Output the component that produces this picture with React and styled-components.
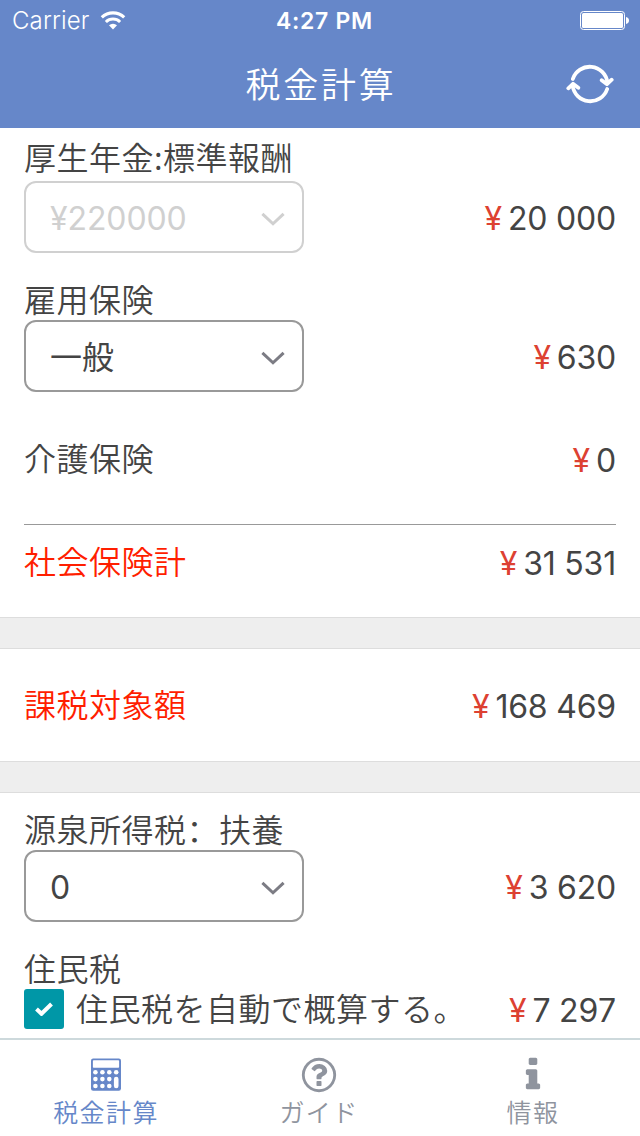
import { useState } from 'react';
import styled, { createGlobalStyle } from 'styled-components';

const GlobalStyle = createGlobalStyle`
  * {
    box-sizing: border-box;
  }

  body {
    margin: 0;
    background: #fff;
    font-family: Inter, 'Noto Sans CJK JP', sans-serif;
    font-weight: 350;
    color: #444;
  }
`;

const Screen = styled.div`
  display: flex;
  flex-direction: column;
  width: 640px;
  height: 1136px;
  overflow: hidden;
  background: #fff;
`;

const Header = styled.header`
  flex: none;
  height: 128px;
  background: #6687c9;
  color: #fff;
`;

const StatusBar = styled.div`
  display: grid;
  grid-template-columns: 1fr auto 1fr;
  align-items: center;
  height: 40px;
  padding: 1px 11px 0 12px;
  font-size: 24px;
`;

const Carrier = styled.div`
  display: flex;
  align-items: center;
  gap: 10px;
  font-weight: 350;
  letter-spacing: 0.15px;
`;

const Clock = styled.div`
  padding-left: 8px;
  font-weight: 600;
  font-size: 23px;
  letter-spacing: 0.7px;
`;

const BatterySlot = styled.div`
  display: flex;
  justify-content: flex-end;
`;

const NavBar = styled.div`
  display: grid;
  grid-template-columns: 100px 1fr 100px;
  align-items: center;
  height: 88px;
`;

const Title = styled.h1`
  grid-column: 2;
  margin: 0;
  font-family: 'Noto Sans CJK JP', sans-serif;
  font-size: 35px;
  font-weight: 350;
  line-height: 86px;
  height: 88px;
  letter-spacing: 2.7px;
  text-indent: 2px;
  text-align: center;
`;

const IconButton = styled.button`
  display: flex;
  justify-content: center;
  padding: 0;
  border: 0;
  background: none;
  color: inherit;
`;

const Content = styled.main`
  flex: 1;
  min-height: 0;
  overflow: hidden;
`;

const Section = styled.section`
  padding: ${props => props.$pad || '0 24px'};
`;

const Separator = styled.div`
  height: 32px;
  background: #eee;
  border-top: 1px solid #ddd;
  border-bottom: 1px solid #ddd;
`;

const Divider = styled.hr`
  height: 1px;
  margin: 0;
  border: 0;
  background: #999;
`;

const Label = styled.div`
  height: ${props => props.$height || 40}px;
  line-height: 37px;
  font-family: 'Noto Sans CJK JP', sans-serif;
  font-size: 32px;
  letter-spacing: 0.5px;
  white-space: nowrap;
  color: ${props => (props.$total ? '#ff1e00' : 'inherit')};
`;

/* full-width colon set on the left of its cell */
const Colon = styled.span`
  font-family: 'Noto Sans CJK SC', sans-serif;
`;

const Row = styled.div`
  display: flex;
  align-items: center;
  justify-content: space-between;
  height: ${props => props.$height}px;
  margin-bottom: ${props => props.$gap || 0}px;
`;

const Select = styled.button`
  display: flex;
  align-items: center;
  justify-content: space-between;
  width: 280px;
  height: 72px;
  padding: 3px 17px 0 24px;
  border: 2px solid ${props => (props.disabled ? '#d0d0d0' : '#999')};
  border-radius: 12px;
  background: #fff;
  font: inherit;
  font-size: 32px;
  font-weight: 370;
  line-height: 40px;
  letter-spacing: -0.1px;
  color: ${props => (props.disabled ? '#d0d0d0' : '#444')};

  svg {
    color: ${props => (props.disabled ? '#d0d0d0' : '#7c7c84')};
  }
`;

const AmountText = styled.div`
  display: flex;
  align-items: center;
  gap: 6px;
  padding-top: 3px;
  font-size: 32px;
  font-weight: 370;
  font-kerning: none;
  line-height: 40px;
  letter-spacing: -0.2px;
  white-space: pre;
`;

const Yen = styled.span`
  color: #dd4132;
`;

const CheckRow = styled.label`
  display: flex;
  align-items: center;
  gap: 12px;
`;

const CheckBox = styled.span`
  display: flex;
  align-items: center;
  justify-content: center;
  width: 40px;
  height: 40px;
  border-radius: 3px;
  background: #0097a7;
  color: #fff;
`;

const TabBar = styled.nav`
  flex: none;
  display: grid;
  grid-template-columns: 212px 214px 214px;
  height: 98px;
  border-top: 2px solid #cdd9dc;
  background: #fff;
`;

const Tab = styled.button`
  display: flex;
  flex-direction: column;
  align-items: center;
  padding: 15px 0 0;
  border: 0;
  background: none;
  font-family: 'Noto Sans CJK JP', sans-serif;
  font-weight: 350;
  font-size: 25px;
  line-height: 32px;
  letter-spacing: 1.4px;
  color: ${props => (props.$active ? '#6687c9' : '#8f949e')};

  svg {
    height: 40px;
  }
`;

const WifiIcon = () => (
  <svg width="26" height="20" viewBox="0 0 26 20" fill="none" stroke="currentColor">
    <path d="M1.8 6.4a16.2 16.2 0 0 1 22.4 0" strokeWidth="3.2" />
    <path d="M5.9 11a10.2 10.2 0 0 1 14.2 0" strokeWidth="3" />
    <path d="M13 18.6l-4-4.3a6 6 0 0 1 8 0z" fill="currentColor" stroke="none" />
  </svg>
);

const BatteryIcon = () => (
  <svg width="49" height="19" viewBox="0 0 49 19">
    <rect x="0.5" y="0.5" width="44" height="18" rx="3" fill="none" stroke="#fff" />
    <rect x="2" y="2" width="41" height="15" rx="1.5" fill="#fff" />
    <path d="M46 6q3 0.8 3 3.5T46 13z" fill="#fff" />
  </svg>
);

const RefreshIcon = () => (
  <svg width="48" height="42" viewBox="0 0 48 42" fill="none" stroke="currentColor" strokeWidth="3.8" strokeLinecap="round" strokeLinejoin="round">
    <path d="M6.8 16a17.8 17.8 0 0 1 34.6 3.6" />
    <path d="M41.2 26a17.8 17.8 0 0 1-34.6-3.6" />
    <path d="M35.7 17.2l5.3 4 4.7-4.5" />
    <path d="M2.3 25.3l4.7-4.5 5.3 4" />
  </svg>
);

const ChevronIcon = () => (
  <svg width="24" height="14" viewBox="0 0 24 14" fill="none" stroke="currentColor" strokeWidth="3">
    <path d="M1.4 1.8L12 11.8 22.6 1.8" />
  </svg>
);

const CheckIcon = () => (
  <svg width="20" height="14" viewBox="0 0 20 14" fill="none" stroke="currentColor" strokeWidth="4">
    <path d="M2.5 7l5 4.8L17.5 2" />
  </svg>
);

const CalculatorIcon = () => (
  <svg width="30" height="40" viewBox="0 0 30 40">
    <rect y="3.4" width="30" height="32.4" rx="2.2" fill="currentColor" />
    <rect x="1.9" y="5.3" width="26.2" height="7.4" rx="0.8" fill="#fff" />
    {[17.2, 24.1, 31].map(y => [4.4, 11.4, 18.3].map(x => (
      <circle key={`${x}-${y}`} cx={x} cy={y} r="2.3" fill="#fff" />
    )))}
    <circle cx="25.2" cy="17.2" r="2.3" fill="#fff" />
    <rect x="22.9" y="21.8" width="4.6" height="11.5" rx="2.3" fill="#fff" />
  </svg>
);

const HelpIcon = () => (
  <svg width="40" height="40" viewBox="0 0 1792 1792" fill="currentColor">
    <path d="M1008 1200v160q0 14-9 23t-23 9h-160q-14 0-23-9t-9-23v-160q0-14 9-23t23-9h160q14 0 23 9t9 23zm256-496q0 50-15 90t-45.5 69-52 44-59.5 36q-32 18-46.5 28t-26 24-11.5 29v32q0 14-9 23t-23 9h-160q-14 0-23-9t-9-23v-68q0-35 10.5-64.5t24-47.5 39-35.5 41-25.5 44.5-21q53-25 75-43t22-49q0-42-43.5-71.5t-95.5-29.5q-56 0-95 27-29 20-80 83-9 12-25 12-11 0-19-6l-108-82q-10-7-12-20t5-23q122-192 349-192 129 0 238.5 89.5t109.5 214.5zm-368-448q-130 0-248.5 51t-204 136.5-136.5 204-51 248.5 51 248.5 136.5 204 204 136.5 248.5 51 248.5-51 204-136.5 136.5-204 51-248.5-51-248.5-136.5-204-204-136.5-248.5-51zm768 640q0 209-103 385.5t-279.5 279.5-385.5 103-385.5-103-279.5-279.5-103-385.5 103-385.5 279.5-279.5 385.5-103 385.5 103 279.5 279.5 103 385.5z" />
  </svg>
);

const InfoIcon = () => (
  <svg width="40" height="40" viewBox="0 0 1792 1792" fill="currentColor">
    <path d="M1216 1344v128q0 26-19 45t-45 19h-512q-26 0-45-19t-19-45v-128q0-26 19-45t45-19h64v-384h-64q-26 0-45-19t-19-45v-128q0-26 19-45t45-19h384q26 0 45 19t19 45v576h64q26 0 45 19t19 45zm-128-1152v192q0 26-19 45t-45 19h-256q-26 0-45-19t-19-45v-192q0-26 19-45t45-19h256q26 0 45 19t19 45z" />
  </svg>
);

const Amount = ({ value }) => (
  <AmountText>
    <Yen>¥</Yen>
    <span>{String(value).replace(/\B(?=(\d{3})+$)/g, ' ')}</span>
  </AmountText>
);

const tabs = [
  { id: 'calc', label: '税金計算', Icon: CalculatorIcon },
  { id: 'guide', label: 'ガイド', Icon: HelpIcon },
  { id: 'info', label: '情報', Icon: InfoIcon },
];

const App = () => {
  const [activeTab, setActiveTab] = useState('calc');
  const [autoTax, setAutoTax] = useState(true);

  return (
    <Screen>
      <GlobalStyle />
      <Header>
        <StatusBar>
          <Carrier>
            Carrier
            <WifiIcon />
          </Carrier>
          <Clock>4:27 PM</Clock>
          <BatterySlot>
            <BatteryIcon />
          </BatterySlot>
        </StatusBar>
        <NavBar>
          <Title>税金計算</Title>
          <IconButton>
            <RefreshIcon />
          </IconButton>
        </NavBar>
      </Header>

      <Content>
        <Section $pad="10px 24px 0">
          <Label $height={43}>厚生年金:標準報酬</Label>
          <Row $height={72} $gap={27}>
            <Select disabled>
              ¥220000
              <ChevronIcon />
            </Select>
            <Amount value={20000} />
          </Row>
          <Label>雇用保険</Label>
          <Row $height={72} $gap={35}>
            <Select>
              一般
              <ChevronIcon />
            </Select>
            <Amount value={630} />
          </Row>
          <Row $height={64} $gap={33}>
            <Label>介護保険</Label>
            <Amount value={0} />
          </Row>
          <Divider />
          <Row $height={74} $gap={18}>
            <Label $total>社会保険計</Label>
            <Amount value={31531} />
          </Row>
        </Section>
        <Separator />
        <Section>
          <Row $height={112}>
            <Label $total>課税対象額</Label>
            <Amount value={168469} />
          </Row>
        </Section>
        <Separator />
        <Section $pad="17px 24px 0">
          <Label>源泉所得税<Colon lang="zh-CN">：</Colon>扶養</Label>
          <Row $height={72} $gap={27}>
            <Select>
              0
              <ChevronIcon />
            </Select>
            <Amount value={3620} />
          </Row>
          <Label>住民税</Label>
          <Row $height={40}>
            <CheckRow onClick={() => setAutoTax(!autoTax)}>
              <CheckBox>{autoTax && <CheckIcon />}</CheckBox>
              <Label>住民税を自動で概算する。</Label>
            </CheckRow>
            <Amount value={7297} />
          </Row>
        </Section>
      </Content>

      <TabBar>
        {tabs.map(({ id, label, Icon }) => (
          <Tab key={id} $active={id === activeTab} onClick={() => setActiveTab(id)}>
            <Icon />
            {label}
          </Tab>
        ))}
      </TabBar>
    </Screen>
  );
};

export default App;
